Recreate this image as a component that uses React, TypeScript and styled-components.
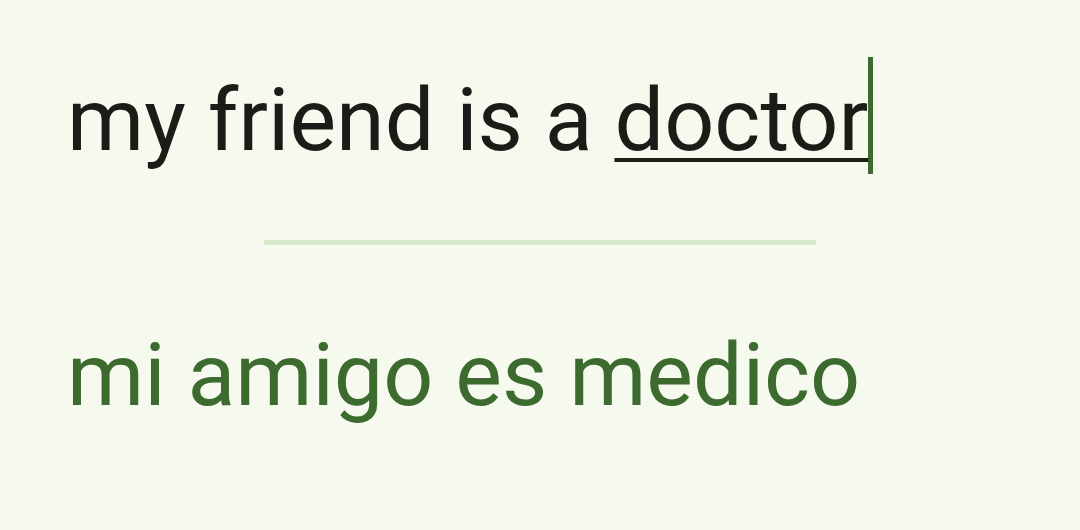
import React from "react";
import styled, { createGlobalStyle } from "styled-components";

const Global = createGlobalStyle`
  html, body { margin: 0; padding: 0; background: #f6faee; }
  body { font-family: Roboto, "Noto Sans", sans-serif; }
`;

const Screen = styled.div`
  width: 1080px;
  height: 530px;
  background: #f6faee;
  display: flex;
  flex-direction: column;
  padding: 57px 0 0 67px;
  box-sizing: border-box;
`;

const SourceLine = styled.div`
  position: relative;
  font-size: 88px;
  line-height: 117px;
  height: 117px;
  color: #1a1c18;
  white-space: nowrap;
`;

const Words = styled.span`
  position: relative;
  top: 4px;
`;

const Composing = styled.span`
  text-decoration: underline;
  text-decoration-thickness: 4px;
  text-underline-offset: 8px;
  text-decoration-color: #1a1c18;
`;

const Caret = styled.span`
  display: inline-block;
  width: 5px;
  height: 117px;
  background: #3c6a2f;
  vertical-align: top;
`;

const Divider = styled.div`
  align-self: flex-start;
  width: 552px;
  height: 5px;
  margin: 66px 0 0 197px;
  background: #d7e8cd;
`;

const Translation = styled.div`
  font-size: 88px;
  line-height: 103px;
  color: #3c6a2f;
  white-space: nowrap;
  margin-top: 78px;
`;

export default function App() {
  return (
    <>
      <Global />
      <Screen>
        <SourceLine>
          <Words>
            my friend is a <Composing>doctor</Composing>
          </Words>
          <Caret />
        </SourceLine>
        <Divider />
        <Translation>mi amigo es medico</Translation>
      </Screen>
    </>
  );
}
